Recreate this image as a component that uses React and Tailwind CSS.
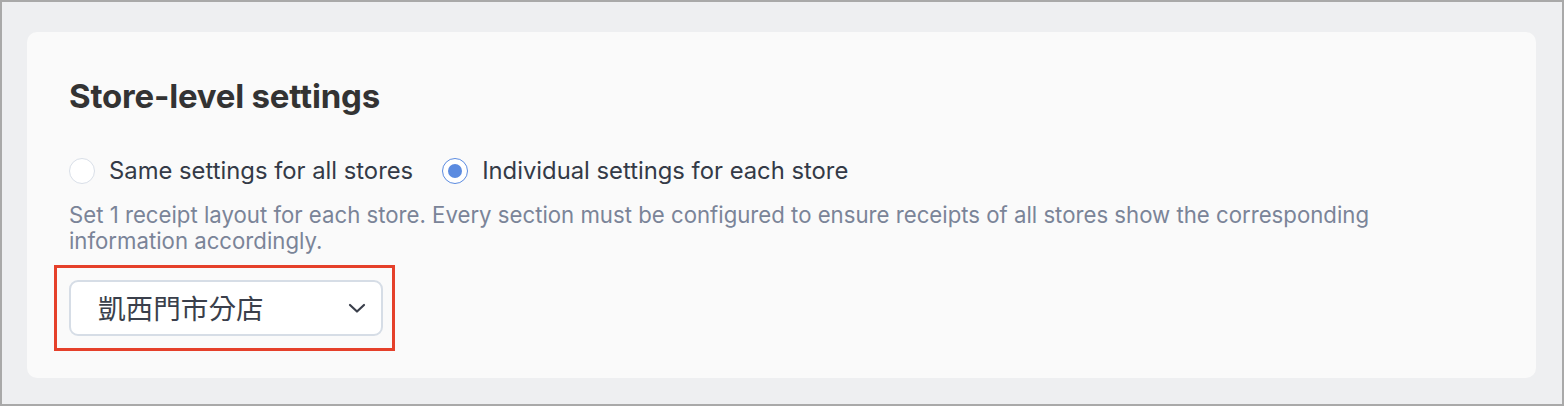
export default function App() {
  return (
    <div className="w-[1564px] h-[406px] bg-[#eeeff1] border-2 border-[#a9a9a9] pt-[30px] pl-[25px] pr-[26px] pb-[26px]" style={{ fontFamily: 'Inter, "Noto Sans CJK TC", sans-serif' }}>
      <div className="h-[346px] bg-[#fafafa] rounded-[10px] pl-[42px] pt-[44px]">
        <h1 className="text-[33px] leading-[40px] font-bold text-[#333333] tracking-[-0.2px]">Store-level settings</h1>
        <div className="flex items-center mt-[40px] h-[30px]">
          <label className="flex items-center">
            <span className="w-[26px] h-[26px] rounded-full border border-[#d9dfe8] bg-white" />
            <span className="ml-[14px] text-[23.8px] text-[#343a47]">Same settings for all stores</span>
          </label>
          <label className="flex items-center ml-[29px]">
            <span className="w-[26px] h-[26px] rounded-full border border-[#5b8be0] bg-white flex items-center justify-center">
              <span className="w-[14px] h-[14px] rounded-full bg-[#5b8be0]" />
            </span>
            <span className="ml-[14px] text-[23.8px] text-[#343a47]">Individual settings for each store</span>
          </label>
        </div>
        <p className="mt-[16px] text-[22.2px] leading-[26px] text-[#7a8498] max-w-[1340px]">
          Set 1 receipt layout for each store. Every section must be configured to ensure receipts of all stores show the corresponding information accordingly.
        </p>
        <div className="mt-[11px] ml-[-15px] w-[341px] h-[86px] border-[3px] border-[#e5402a] p-[12px]">
          <button className="w-[314px] h-[56px] bg-white border-2 border-[#d6dde6] rounded-[9px] flex items-center justify-between pl-[27px] pr-[15px]">
            <span className="text-[27.6px] text-[#3a3f4b]" style={{ fontFamily: '"Noto Sans CJK TC", sans-serif' }}>凱西門市分店</span>
            <svg width="18" height="12" viewBox="0 0 18 12" fill="none">
              <path d="M2 3 L9 9.5 L16 3" stroke="#3a3f4b" strokeWidth="2.2" strokeLinecap="round" strokeLinejoin="round" />
            </svg>
          </button>
        </div>
      </div>
    </div>
  );
}
